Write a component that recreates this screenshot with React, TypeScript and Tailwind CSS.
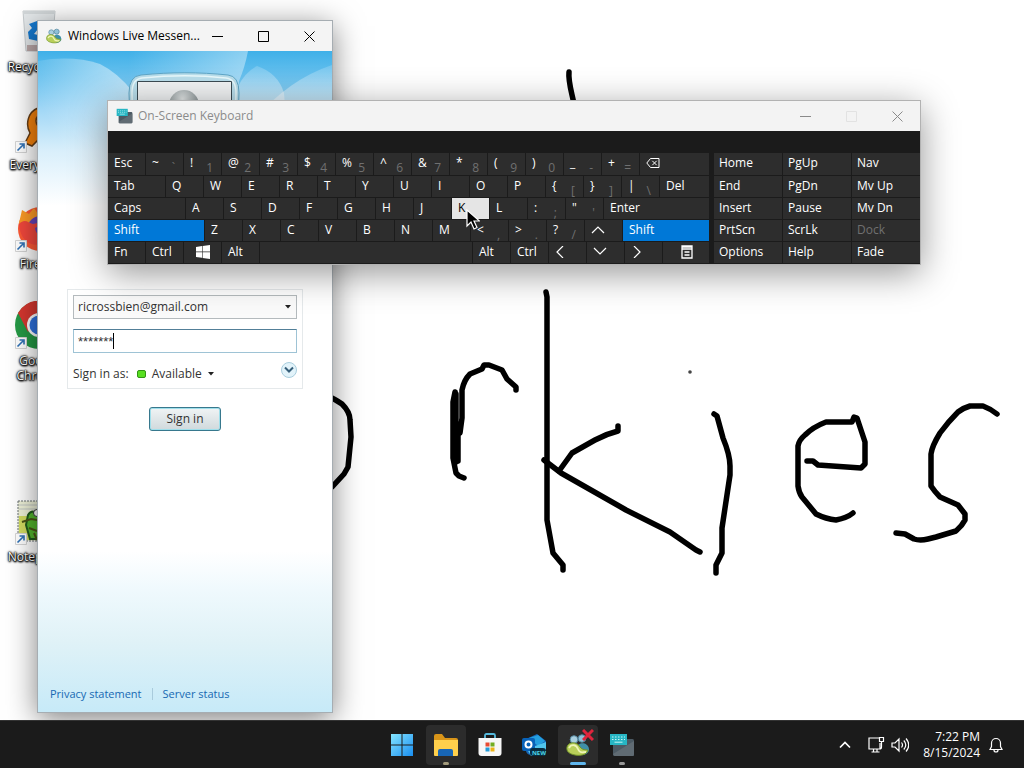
import { useState, type ReactNode } from "react";

const STROKES = [
  "M569 72C568 82 572 93 574 104",
  "M325 395C333 398 338 401 342 404C347 409 350 415 350 420L351 437L348 467L344 474L332 487L324 492",
  "M455 392L453 402V458L456 473L459 476L464 478",
  "M456 394V462",
  "M458 424V461",
  "M460 433L462 418V390Q464 380 470 374L482 369L484 365H489L502 370L507 379L516 387V390",
  "M546 292L547 297V520L553 553L563 565V570",
  "M544 460L561 473L626 510L670 532L696 550L700 552",
  "M618 426V431Q606 434 595 440L572 453L559 471",
  "M714 414L717 416L723 438Q730 455 730 466V475L722 528V553L716 565V573",
  "M807 461H813L818 465L861 468L865 464V442L857 418L854 417L852 422H826Q813 427 805 435Q799 440 798 446V486Q799 493 802 497L816 514Q826 519 836 520Q847 518 853 513",
  "M997 414Q991 409 983 406H970Q963 408 958 412Q948 422 940 433Q932 446 931 454V486Q935 492 940 497L958 505L965 514V520Q962 526 956 531L936 537L928 539Q920 541 914 539L905 534L896 533",
];

type Key = { main: string; sub?: string; width?: string; tone?: "active" | "hover" | "dim"; icon?: ReactNode };
const k = (main: string, sub?: string): Key => ({ main, sub });

const arrow = (d: string) => (
  <svg viewBox="0 0 14 12" className="h-3 w-3.5" fill="none" stroke="currentColor" strokeWidth="1.2"><path d={d} /></svg>
);
const winGlyph = (
  <svg viewBox="0 0 14 14" className="ml-1.5 h-3.5 w-3.5" fill="white"><path d="M0 2l6-1v5.500H0zM6.600 .9L14 0v6.500H6.600zM0 7.200h6v5.600L0 12zM6.600 7.200H14V14l-7.400-1z" /></svg>
);
const menuGlyph = (
  <svg viewBox="0 0 12 14" className="ml-3 h-3.5 w-3" fill="none" stroke="white" strokeWidth="1.300"><path d="M1 1h10v12H1zM1 4h10M1 2.200h10M3.500 7h5M3.500 10h5" /></svg>
);
const backGlyph = (
  <svg viewBox="0 0 14 12" className="h-3 w-3.5" fill="none" stroke="white" strokeWidth="1"><path d="M.8 6L4.500 1.500H13v9H4.500zM6.300 3.800l4.400 4.400M10.700 3.800L6.300 8.200" /></svg>
);

const ROWS: Key[][] = [
  [k("Esc"), k("~", "`"), k("!", "1"), k("@", "2"), k("#", "3"), k("$", "4"), k("%", "5"), k("^", "6"), k("&", "7"), k("*", "8"), k("(", "9"), k(")", "0"), k("_", "-"), k("+", "="), { main: "Backspace", width: "grow", icon: backGlyph }],
  [{ main: "Tab", width: "w-[57px]" }, k("Q"), k("W"), k("E"), k("R"), k("T"), k("Y"), k("U"), k("I"), k("O"), k("P"), k("{", "["), k("}", "]"), k("|", "\\"), { main: "Del", width: "grow" }],
  [{ main: "Caps", width: "w-[77px]" }, k("A"), k("S"), k("D"), k("F"), k("G"), k("H"), k("J"), { main: "K", tone: "hover" }, k("L"), k(":", ";"), k("\"", "'"), { main: "Enter", width: "grow" }],
  [{ main: "Shift", width: "w-24", tone: "active" }, k("Z"), k("X"), k("C"), k("V"), k("B"), k("N"), k("M"), k("<", ","), k(">", "."), k("?", "/"), { main: "Up", icon: arrow("M1 9l6-6 6 6") }, { main: "Shift", width: "grow", tone: "active" }],
  [k("Fn"), k("Ctrl"), { main: "Windows", icon: winGlyph }, k("Alt"), { main: "", width: "w-[212px]" }, k("Alt"), k("Ctrl"), { main: "Left", icon: arrow("M8 0L2 6l6 6") }, { main: "Down", icon: arrow("M1 2l6 6 6-6") }, { main: "Right", icon: arrow("M3 0l6 6-6 6") }, { main: "Menu", width: "grow", icon: menuGlyph }],
];

const SIDE: Key[] = [
  k("Home"), k("PgUp"), k("Nav"), k("End"), k("PgDn"), k("Mv Up"), k("Insert"), k("Pause"), k("Mv Dn"),
  k("PrtScn"), k("ScrLk"), { main: "Dock", tone: "dim" }, k("Options"), k("Help"), k("Fade"),
];

function KeyCap({ item, side = false, tall = false }: { item: Key; side?: boolean; tall?: boolean }) {
  const tone =
    item.tone === "active" ? "bg-[#0078d7] text-white"
    : item.tone === "hover" ? "bg-[#e5e5e5] text-black"
    : item.tone === "dim" ? "bg-[#2d2d2d] text-[#707070]"
    : "bg-[#2d2d2d] text-white";
  const size = side ? "pl-[5px]" : item.width === "grow" ? "flex-1 pl-1.5" : `shrink-0 pl-1.5 ${item.width ?? "w-[37px]"}`;
  return (
    <button type="button" aria-label={item.main || "Space"} className={`flex items-center pb-0.5 text-left text-xs leading-4 whitespace-nowrap ${tall ? "h-[22px]" : "h-[21px]"} ${size} ${tone}`}>
      {item.icon ?? <span>{item.main}</span>}
      {item.sub && <span className="mt-2.5 ml-auto pr-2 text-[#707070]">{item.sub}</span>}
    </button>
  );
}

function Caption({ dim = false }: { dim?: boolean }) {
  const cell = "grid h-full w-[46px] place-items-center";
  const tone = dim ? "text-[#8a8a8a]" : "text-black";
  return (
    <div className={`flex h-full shrink-0 ${tone}`}>
      <button type="button" aria-label="Minimize" className={cell}><svg viewBox="0 0 11 11" className="size-[11px]" stroke="currentColor"><path d="M0 5.500h11" /></svg></button>
      <button type="button" aria-label="Maximize" className={`${cell} ${dim ? "text-[#e2e2e2]" : ""}`}><svg viewBox="0 0 11 11" className="size-[11px]" fill="none" stroke="currentColor"><path d="M.5 .5h10v10H.5z" /></svg></button>
      <button type="button" aria-label="Close" className={cell}><svg viewBox="0 0 11 11" className="size-[11px]" stroke="currentColor"><path d="M.5 .5l10 10M10.500 .5l-10 10" /></svg></button>
    </div>
  );
}

function BuddiesIcon({ className }: { className: string }) {
  return (
    <svg viewBox="0 0 24 24" className={className}>
      <circle cx="8" cy="6.500" r="3.800" fill="#a9cfdf" stroke="#5688a0" />
      <circle cx="16" cy="5.500" r="3.800" fill="#8fc0d6" stroke="#4a7f99" />
      <path d="M11 15c0-6 11-7 12 1 .5 3-3 6-7 6-4-1-6-4-5-7z" fill="#3f8fa8" />
      <path d="M1 14c1-5 10-6 13 0 2 3 6 3 8 3-1 5-8 6-13 5S0 19 1 14z" fill="#b9cf5a" stroke="#73952a" />
      <path d="M3 15c2-4 7-4 9 1s5 3 8 3" fill="none" stroke="#eef5b8" strokeWidth="1.800" />
    </svg>
  );
}

function OskIcon({ className }: { className: string }) {
  return (
    <svg viewBox="0 0 26 24" className={className}>
      <rect x="4" y="6" width="21" height="17" rx="1.500" fill="#4c5a64" />
      <path d="M4 21L25 8v13.500a1.500 1.500 0 0 1-1.500 1.500h-18z" fill="#606b73" />
      <path d="M1 1h17v11H1z" fill="#27b6c4" />
      <path d="M3 4h13M3 6.500h13" stroke="#c5f4f4" strokeDasharray="1.500 1.500" />
      <path d="M5.500 9.200h8" stroke="#c5f4f4" />
    </svg>
  );
}

function Shortcut() {
  return (
    <svg viewBox="0 0 12 12" className="absolute bottom-0 left-0 size-3">
      <path d="M.5 .5h11v11H.5z" fill="#fff" stroke="#d5d5d5" />
      <path d="M2.500 9.500L8 4M4.500 3h4.500v4.500" fill="none" stroke="#2e70b5" strokeWidth="1.600" />
    </svg>
  );
}

function DesktopIcon({ top, label, shortcut = true, children }: { top: string; label: string; shortcut?: boolean; children: ReactNode }) {
  return (
    <a href="#" className={`absolute left-0 flex w-[78px] flex-col items-center ${top}`}>
      <span className="relative block h-12 w-12">
        <svg viewBox="0 0 48 48" className="size-12">{children}</svg>
        {shortcut && <Shortcut />}
      </span>
      <span className="mt-1 w-[72px] text-center text-xs leading-[15px] text-white [text-shadow:0_0_1px_#000,0_0_2px_#000,1px_1px_2px_#000,0_1px_2px_#000,0_0_3px_#000]">{label}</span>
    </a>
  );
}

function Desktop() {
  return (
    <>
      <svg viewBox="0 0 1024 720" preserveAspectRatio="xMinYMin slice" className="absolute inset-0 h-full w-full">
        <g fill="none" stroke="#000" strokeWidth="5.500" strokeLinecap="round" strokeLinejoin="round">
          {STROKES.map((d) => <path key={d} d={d} />)}
        </g>
        <circle cx="690" cy="372" r="1.800" fill="#444" />
      </svg>
      <DesktopIcon top="top-[7px]" label="Recycle Bin" shortcut={false}>
        <path d="M8 4h32l-3 40H11z" fill="#e4e8ea" stroke="#c5cacd" />
        <path d="M8 4h32v3H8z" fill="#d2d7d9" />
        <path d="M22 14l-8 3 3 4-4 4 1 7 9 2v-6l-4-1 4-5 2-4zM26 13l7 2-2 9-6-3z" fill="#1679cf" />
        <path d="M12 38h25l-1 6H12z" fill="#bca9a9" />
      </DesktopIcon>
      <DesktopIcon top="top-[105px]" label="Everything">
        <path d="M23 3c9-4 19 2 19 12 0 8-4 14-12 16l-4 1-9 9-7-3 5-10c-5-9-2-21 8-25z" fill="#f5830d" stroke="#643d16" strokeWidth="1.500" />
        <circle cx="29" cy="16" r="8" fill="#f5f5f5" stroke="#643d16" strokeWidth="1.500" />
      </DesktopIcon>
      <DesktopIcon top="top-[204px]" label="Firefox">
        <circle cx="25" cy="25" r="22" fill="#ff5a36" />
        <path d="M4 19L7 6l7 4 5-6 6 9 14 2c7 18-1 26-10 28L14 36z" fill="#ff9c26" />
        <circle cx="25" cy="24" r="12" fill="#6644b9" />
        <path d="M4 20c6-6 9-1 14 0l9-2c-3 3-4 5-7 6 1 8 8 11 15 9-9 14-30 9-31-13z" fill="#f4483d" />
      </DesktopIcon>
      <DesktopIcon top="top-[301px]" label="Google Chrome">
        <circle cx="24" cy="24" r="24" fill="#259a46" />
        <path d="M3 12a24 24 0 0 1 42 0H24l-11 19z" fill="#d93830" />
        <path d="M45 12a24 24 0 0 1-23 36l13-23-9-13z" fill="#f9c52d" />
        <circle cx="24" cy="24" r="12" fill="#fff" />
        <circle cx="24" cy="24" r="9.500" fill="#2e72df" />
      </DesktopIcon>
      <DesktopIcon top="top-[497px]" label="Notepad++">
        <path d="M3 4h42v40H3z" fill="#eef1d8" stroke="#687073" strokeDasharray="2 1" />
        <path d="M4 8h40M4 12h40" stroke="#c3c8c5" />
        <path d="M4 19h42v24H4z" fill="#d2dc61" />
        <path d="M13 18c3-5 8-4 10 0l12-1 7 10-5 15H15l-4-14z" fill="#54b72d" stroke="#205b1c" strokeWidth="2" />
        <circle cx="22" cy="16" r="3.500" fill="#fff" stroke="#333" />
        <path d="M7 25l9-3 12 2M14 31l8 3M19 36l3 7M26 34l2 8" fill="none" stroke="#4c5516" strokeWidth="2" />
      </DesktopIcon>
    </>
  );
}

function Messenger() {
  const [password, setPassword] = useState("*******");
  return (
    <section aria-label="Windows Live Messenger" className="absolute top-5 left-[37px] flex h-[693px] w-[296px] flex-col border border-[#a6adb2] bg-white shadow-[0_6px_28px_rgba(0,0,0,0.5)]">
      <header className="flex h-[30px] shrink-0 items-center bg-[#f4f4f4] pl-2">
        <BuddiesIcon className="size-4 shrink-0" />
        <h1 className="ml-1.5 min-w-0 flex-1 text-xs whitespace-nowrap">Windows Live Messen...</h1>
        <Caption />
      </header>
      <div className="flex flex-1 flex-col bg-[linear-gradient(to_bottom,#fff_0px,#fff_500px,#eff9fd_540px,#e0f2f7_590px,#c7eaf8_660px)]">
        <svg viewBox="0 0 294 238" className="w-full">
          <defs>
            <linearGradient id="sky" x1="0" y1="0" x2="0" y2="1"><stop offset="0" stopColor="#3fb0e8" /><stop offset=".12" stopColor="#6dc3ef" /><stop offset=".25" stopColor="#a3d8f6" /><stop offset=".42" stopColor="#d9effb" /><stop offset=".65" stopColor="#fff" /></linearGradient>
            <linearGradient id="petal" gradientUnits="userSpaceOnUse" x1="0" y1="8" x2="0" y2="120"><stop offset="0" stopColor="#fff" stopOpacity=".12" /><stop offset=".4" stopColor="#fff" stopOpacity=".5" /><stop offset="1" stopColor="#fff" stopOpacity=".1" /></linearGradient>
            <linearGradient id="leftPetal" gradientUnits="userSpaceOnUse" x1="90" y1="30" x2="10" y2="70"><stop offset="0" stopColor="#fff" stopOpacity=".5" /><stop offset="1" stopColor="#fff" stopOpacity="0" /></linearGradient>
            <linearGradient id="beam" gradientUnits="userSpaceOnUse" x1="90" y1="0" x2="210" y2="0"><stop offset="0" stopColor="#fff" stopOpacity="0" /><stop offset="1" stopColor="#fff" stopOpacity=".4" /></linearGradient>
            <radialGradient id="head" cx=".45" cy=".3" r=".6"><stop offset="0" stopColor="#e6eaea" /><stop offset="1" stopColor="#858f91" /></radialGradient>
          </defs>
          <path d="M0 0h294v238H0z" fill="url(#sky)" />
          <path d="M90 0h120q-3 16-9 30l-2 60H90z" fill="url(#beam)" />
          <path d="M0 10Q34 4 62 13Q80 22 94 40V150H0z" fill="url(#leftPetal)" />
          <path d="M200 36Q206 22 219 15Q240 22 246 42L254 150H200z" fill="url(#petal)" />
          <path d="M200 90Q240 32 294 14V150H200z" fill="url(#petal)" />
          <path d="M93 104L91 42q0-17 12-18c30-3 58-3 87 0q11 1 11 18l-2 62z" fill="#b9deeb" stroke="#5ea6c7" />
          <path d="M95 104L94 42q0-14 10-15c30-3 56-3 84 0q10 1 10 15l-2 62z" fill="none" stroke="#e9f9fc" strokeWidth="1.500" />
          <path d="M99.500 30.500h94V110h-94z" fill="#f1f3f4" stroke="#3b4b53" />
          <circle cx="146" cy="54" r="15" fill="url(#head)" />
        </svg>
        <form className="flex flex-col items-center" onSubmit={(e) => e.preventDefault()}>
          <div className="w-[236px] border border-[#e5e9eb] p-[5px] text-[#333]">
            <div className="relative">
              <select aria-label="Email address" className="block h-6 w-full appearance-none border border-[#b4babd] bg-[#fafafa] pl-1 text-xs">
                <option>ricrossbien@gmail.com</option>
              </select>
              <svg viewBox="0 0 6 4" className="pointer-events-none absolute top-2.5 right-1.5 h-1 w-1.5"><path d="M0 0h6L3 3.500z" fill="#222" /></svg>
            </div>
            <div className="relative mt-2.5">
              <input aria-label="Password" value={password} onChange={(e) => setPassword(e.target.value)} className="block h-6 w-full border border-[#9ec3d5] border-t-[#527f98] bg-white pl-1 font-['Liberation_Sans',sans-serif] text-[13px] outline-none" />
              <span className="pointer-events-none absolute top-1 left-10 h-4 w-px bg-black" />
            </div>
            <div className="mt-3 flex h-[18px] items-center text-xs">
              <span>Sign in as:</span>
              <button type="button" className="ml-2 flex items-center gap-1.5">
                <span className="h-2 w-[9px] rounded-xs border border-[#329315] bg-[#58df20]" />
                Available
                <svg viewBox="0 0 6 4" className="h-1 w-1.5"><path d="M0 0h6L3 3.500z" fill="#222" /></svg>
              </button>
              <button type="button" aria-label="Show options" className="mb-2 ml-auto grid size-4 place-items-center rounded-full border border-[#a9cede] bg-[#e2f3fa]">
                <svg viewBox="0 0 10 8" className="h-2 w-2.5" fill="none" stroke="#365f7a" strokeWidth="2"><path d="M1 1.500l4 4 4-4" /></svg>
              </button>
            </div>
          </div>
          <button type="submit" className="mt-[18px] h-6 w-[72px] rounded-[3px] border border-[#37788d] bg-linear-to-b from-[#f0f4f5] to-[#d0d9dc] text-xs text-[#333] shadow-[inset_0_0_0_1px_#9fdfeb]">Sign in</button>
        </form>
        <footer className="mt-auto flex h-9 items-center px-3 text-[11px] text-[#1769b3]">
          <a href="#">Privacy statement</a>
          <span className="mx-2.5 h-3 w-px bg-[#a9cbdc]" />
          <a href="#">Server status</a>
        </footer>
      </div>
    </section>
  );
}

function Keyboard() {
  return (
    <section aria-label="On-Screen Keyboard" className="absolute top-[100px] left-[107px] w-[814px] border border-[#b2b2b2] bg-[#1b1b1b] shadow-[0_8px_34px_rgba(0,0,0,0.42)]">
      <header className="flex h-[30px] items-center bg-[#f3f3f3] pl-2">
        <OskIcon className="h-4 w-[17px] shrink-0" />
        <h2 className="ml-[5px] flex-1 text-xs text-[#8b8b8b]">On-Screen Keyboard</h2>
        <Caption dim />
      </header>
      <div className="flex gap-[5px] pt-[22px] pb-px">
        <div className="flex w-[601px] flex-col gap-px">
          {ROWS.map((row, i) => (
            <div key={i} className="flex gap-px">{row.map((item, j) => <KeyCap key={j} item={item} tall={i === 0} />)}</div>
          ))}
        </div>
        <div className="grid flex-1 grid-cols-3 gap-px">
          {SIDE.map((item, i) => <KeyCap key={item.main} item={item} side tall={i < 3} />)}
        </div>
      </div>
    </section>
  );
}

function TaskButton({ label, active = false, mark, children }: { label: string; active?: boolean; mark?: string; children: ReactNode }) {
  return (
    <button type="button" aria-label={label} className={`relative grid size-10 place-items-center rounded ${active ? "bg-[#2c2c2c]" : ""}`}>
      {children}
      {mark && <span className={`absolute bottom-0 left-1/2 h-[3px] -translate-x-1/2 rounded-full ${mark}`} />}
    </button>
  );
}

function Taskbar() {
  return (
    <nav className="relative grid h-12 grid-cols-[1fr_auto_1fr] items-center border-t border-[#333] bg-[#1b1b1b] text-white">
      <span />
      <div className="flex gap-1">
        <TaskButton label="Start">
          <svg viewBox="0 0 24 24" className="size-6"><defs><linearGradient id="start" x1="0" y1="0" x2="1" y2="1"><stop stopColor="#85e5ff" /><stop offset="1" stopColor="#198ef0" /></linearGradient></defs><path d="M1 1h10.500v10.500H1zM12.500 1H23v10.500H12.500zM1 12.500h10.500V23H1zM12.500 12.500H23V23H12.500z" fill="url(#start)" /></svg>
        </TaskButton>
        <TaskButton label="File Explorer" active mark="w-1.5 bg-[#a39b7c]">
          <svg viewBox="0 0 26 24" className="h-6 w-[26px]"><path d="M1 3q0-2 2-2h6l3 4h11q2 0 2 2v13H1z" fill="#d99519" /><path d="M1 7h24v15q0 1-1 1H2q-1 0-1-1z" fill="#ffd04c" /><path d="M5 23v-5q0-2 2-2h11q2 0 2 2v5z" fill="#1866b5" /></svg>
        </TaskButton>
        <TaskButton label="Microsoft Store">
          <svg viewBox="0 0 24 24" className="size-6"><path d="M7 8V2.500Q7 1 8.500 1h7Q17 1 17 2.500V8" fill="none" stroke="#55b9dc" strokeWidth="1.800" /><path d="M.5 5h23v15q0 3-3 3h-17q-3 0-3-3z" fill="#f7f7f7" /><path d="M7.500 9.500h4v4h-4z" fill="#e84b32" /><path d="M12.500 9.500h4v4h-4z" fill="#72ad22" /><path d="M7.500 14.500h4v4h-4z" fill="#229bd8" /><path d="M12.500 14.500h4v4h-4z" fill="#edb418" /></svg>
        </TaskButton>
        <TaskButton label="Outlook">
          <span className="relative block h-6 w-6">
            <svg viewBox="0 0 24 24" className="size-6"><path d="M4 6L15 1l9 7v11q0 3-3 3H9q-4 0-5-4z" fill="#1765b6" /><path d="M7 5l9-3 7 6-7 5z" fill="#249fdf" /><path d="M5 16L24 9v11q-1 3-4 3H9z" fill="#50c5ed" /><rect x="0" y="5" width="13" height="13" rx="2" fill="#0862b8" /><circle cx="6.500" cy="11.500" r="3" fill="none" stroke="#fff" strokeWidth="2" /><rect x="8" y="15" width="16" height="8" rx="3" fill="#082c40" /></svg>
            <span className="absolute right-0 bottom-0 text-[6px] leading-2 font-bold text-[#4fd5e6]">NEW</span>
          </span>
        </TaskButton>
        <TaskButton label="Messenger" active mark="w-4 bg-[#60b7ee]">
          <span className="relative"><BuddiesIcon className="size-6" /><svg viewBox="0 0 12 12" className="absolute -top-1 -right-1 size-3" stroke="#df253d" strokeWidth="3"><path d="M1 1l10 10M11 1L1 11" /></svg></span>
        </TaskButton>
        <TaskButton label="On-Screen Keyboard" mark="w-1.5 bg-[#999]"><OskIcon className="h-6 w-[26px]" /></TaskButton>
      </div>
      <div className="flex items-center justify-end pr-5">
        <button type="button" aria-label="Hidden icons" className="mr-4"><svg viewBox="0 0 12 8" className="h-2 w-3" fill="none" stroke="white" strokeWidth="1.700"><path d="M1 6.500l5-5 5 5" /></svg></button>
        <svg viewBox="0 0 18 18" className="mr-1.5 size-[18px]" fill="none" stroke="white" strokeWidth="1.200"><path d="M12 2H2v11h11V7M4.500 16h8M6.500 13v3M10 13v3M12.500 1.500h4v4h-4zM14.500 5.500V11q0 2-2 2" /></svg>
        <svg viewBox="0 0 18 18" className="mr-3.5 size-[18px]" fill="none" stroke="white" strokeWidth="1.200"><path d="M1 7h3l4-4v12l-4-4H1zM10.500 6.500q2 2.500 0 5M12.800 4.500q4 4.500 0 9M15 2.500q5.500 6.500 0 13" /></svg>
        <div className="text-right text-xs leading-4"><p>7:22 PM</p><p>8/15/2024</p></div>
        <button type="button" aria-label="Notifications" className="ml-2"><svg viewBox="0 0 16 18" className="h-[18px] w-4" fill="none" stroke="white" strokeWidth="1.200"><path d="M2 13.500l1.500-3V7a4.500 4.500 0 0 1 9 0v3.500l1.500 3zM6 14a2 2 0 0 0 4 0" /></svg></button>
      </div>
    </nav>
  );
}

export default function App() {
  return (
    <div className="flex min-h-screen flex-col bg-white font-['Open_Sans','Noto_Sans',sans-serif]">
      <main className="relative flex-1 overflow-hidden">
        <Desktop />
        <Messenger />
        <Keyboard />
        <svg viewBox="0 0 14 21" className="pointer-events-none absolute top-[209px] left-[466px] h-[21px] w-3.5"><path d="M1 1v16l4-4 3 7 3-1.500-3-6.500h5.500z" fill="#000" stroke="#fff" strokeWidth="1.200" /></svg>
      </main>
      <Taskbar />
    </div>
  );
}
